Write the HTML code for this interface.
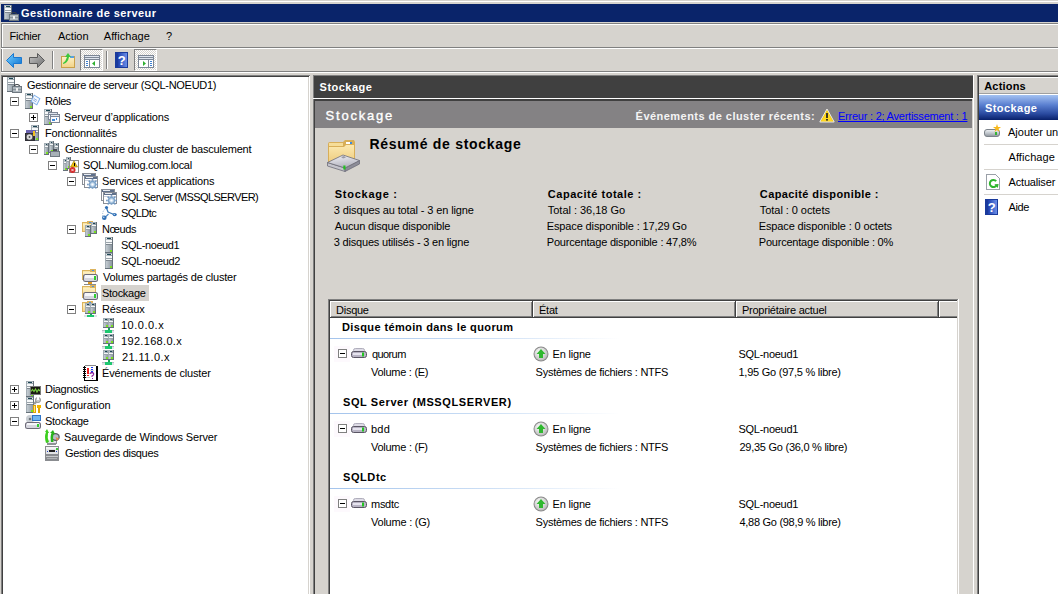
<!DOCTYPE html>
<html><head><meta charset="utf-8"><style>
*{margin:0;padding:0;box-sizing:border-box}
html,body{width:1058px;height:594px;overflow:hidden;background:#d6d3ce}
body{position:relative;font-family:"Liberation Sans",sans-serif;font-size:11px;color:#000}
.a{position:absolute}
.t{position:absolute;white-space:nowrap;line-height:16px;font-size:11px;letter-spacing:-0.25px}
.z{letter-spacing:0}
.n{letter-spacing:-0.15px}
.b{font-weight:bold;letter-spacing:0.4px}
.exp{position:absolute;width:9px;height:9px;border:1px solid #808080;background:#fff}
.exp:before{content:"";position:absolute;left:1px;top:3px;width:5px;height:1px;background:#000}
.exp.p:after{content:"";position:absolute;left:3px;top:1px;width:1px;height:5px;background:#000}
.ic{position:absolute;width:16px;height:16px}
.ic svg{display:block}
</style></head><body>
<svg width="0" height="0" style="position:absolute"><defs>
<linearGradient id="gTow" x1="0" x2="1" y1="0" y2="0"><stop offset="0" stop-color="#c4ccd2"/><stop offset="1" stop-color="#8e99a1"/></linearGradient>
<linearGradient id="gFold" x1="0" x2="0" y1="0" y2="1"><stop offset="0" stop-color="#fdf0c4"/><stop offset="1" stop-color="#f2d48a"/></linearGradient>
<linearGradient id="gDisk" x1="0" x2="0" y1="0" y2="1"><stop offset="0" stop-color="#f4f6f8"/><stop offset="0.5" stop-color="#c2c8ce"/><stop offset="1" stop-color="#8d949b"/></linearGradient>
<linearGradient id="gHelp" x1="0" x2="1" y1="0" y2="0"><stop offset="0" stop-color="#1d3fae"/><stop offset="1" stop-color="#6a8ee8"/></linearGradient>
<linearGradient id="gBlue" x1="0" x2="0" y1="0" y2="1"><stop offset="0" stop-color="#7ea4e6"/><stop offset="1" stop-color="#0a246a"/></linearGradient>
<linearGradient id="gArrB" x1="0" x2="1" y1="0" y2="1"><stop offset="0" stop-color="#74d0ff"/><stop offset="1" stop-color="#0a6fd0"/></linearGradient>
<linearGradient id="gArrG" x1="0" x2="1" y1="0" y2="1"><stop offset="0" stop-color="#c8c8c8"/><stop offset="1" stop-color="#6c6c6c"/></linearGradient>
<radialGradient id="gCirc" cx="0.4" cy="0.35" r="0.7"><stop offset="0" stop-color="#ffffff"/><stop offset="1" stop-color="#b8b8b8"/></radialGradient>
</defs></svg>
<div class="a" style="left:0px;top:0px;width:1058px;height:1px;background:#d6d3ce;"></div>
<div class="a" style="left:0px;top:1px;width:1058px;height:1px;background:#fff;"></div>
<div class="a" style="left:1px;top:4px;width:1057px;height:18px;background:#0a246a;"></div>
<div class="a" style="left:3px;top:5px;width:16px;height:16px"><svg width="16" height="16" viewBox="0 0 16 16" shape-rendering="crispEdges" ><rect x="1" y="0" width="8" height="15" fill="#66717a"/><rect x="1" y="0" width="7" height="14" fill="#a3adb4"/><rect x="2" y="1" width="6" height="13" fill="url(#gTow)"/><rect x="2" y="1" width="6" height="1" fill="#e6eaed"/><rect x="3" y="1" width="4" height="1" fill="#1d4654"/><rect x="2" y="3" width="6" height="2" fill="#f6f8f9"/><rect x="2" y="5" width="6" height="1" fill="#9aa3aa"/><rect x="2" y="6" width="6" height="1" fill="#f6f8f9"/><rect x="2" y="7" width="6" height="1" fill="#7f8890"/><path d="M8.5 9.5 Q8.5 7.5 11 7.5 Q13.5 7.5 13.5 9.5" fill="none" stroke="#3a3f45" stroke-width="1.2" shape-rendering="auto"/><rect x="6" y="9" width="10" height="7" rx="1" fill="#6e7880"/><rect x="7" y="10" width="8" height="5" fill="#aeb7be"/><rect x="7" y="12" width="8" height="1" fill="#8a949b"/><rect x="10" y="11" width="2" height="3" fill="#f0f0f0"/></svg></div>
<div class="t b" style="left:21.00px;top:5px;color:#fff;letter-spacing:0.409px;">Gestionnaire de serveur</div>
<div class="a" style="left:1px;top:23px;width:1057px;height:1px;background:#808080;"></div>
<div class="a" style="left:2px;top:24px;width:1056px;height:1px;background:#fff;"></div>
<div class="a" style="left:1px;top:23px;width:1px;height:50px;background:#808080;"></div>
<div class="a" style="left:2px;top:24px;width:1px;height:48px;background:#fff;"></div>
<div class="t z" style="left:9.60px;top:28px;;letter-spacing:-0.283px;">Fichier</div>
<div class="t z" style="left:58.00px;top:28px;;">Action</div>
<div class="t z" style="left:103.80px;top:28px;;letter-spacing:0.050px;">Affichage</div>
<div class="t z" style="left:166.00px;top:28px;;">?</div>
<div class="a" style="left:1px;top:47px;width:1057px;height:1px;background:#808080;"></div>
<div class="a" style="left:1px;top:48px;width:1057px;height:1px;background:#fff;"></div>
<div class="a" style="left:1px;top:71px;width:1057px;height:1px;background:#808080;"></div>
<div class="a" style="left:1px;top:72px;width:1057px;height:1px;background:#fff;"></div>
<div class="a" style="left:6px;top:53px;width:16px;height:16px"><svg width="16" height="16" viewBox="0 0 16 16"><path d="M0.5 7.5 L7.5 0.5 L7.5 4.5 L15.5 4.5 L15.5 10.5 L7.5 10.5 L7.5 14.5 Z" fill="url(#gArrB)" stroke="#1a78d0" stroke-width="1"/></svg></div>
<div class="a" style="left:29px;top:53px;width:16px;height:16px"><svg width="16" height="16" viewBox="0 0 16 16"><path d="M15.5 7.5 L8.5 0.5 L8.5 4.5 L0.5 4.5 L0.5 10.5 L8.5 10.5 L8.5 14.5 Z" fill="url(#gArrG)" stroke="#5a5a5a" stroke-width="1"/></svg></div>
<div class="a" style="left:52px;top:51px;width:1px;height:18px;background:#808080;"></div>
<div class="a" style="left:53px;top:51px;width:1px;height:18px;background:#fff;"></div>
<div class="a" style="left:60px;top:53px;width:16px;height:16px"><svg width="16" height="16" viewBox="0 0 16 16" shape-rendering="crispEdges"><rect x="1" y="3" width="14" height="12" fill="#c9a04a"/><rect x="2" y="4" width="12" height="10" fill="url(#gFold)"/><rect x="10" y="3" width="4" height="2" fill="#5aa0e0"/><path d="M3 10 Q6 8 7 4 L5 4 L8 0 L11 4 L9 4 Q8 10 3 11 Z" fill="#3cc83c" shape-rendering="auto"/></svg></div>
<div class="a" style="left:80px;top:49px;width:23px;height:22px;border-top:1px solid #808080;border-left:1px solid #808080;border-right:1px solid #fff;border-bottom:1px solid #fff;background-color:#fff;background-image:linear-gradient(45deg,#d6d3ce 25%,transparent 25%,transparent 75%,#d6d3ce 75%),linear-gradient(45deg,#d6d3ce 25%,transparent 25%,transparent 75%,#d6d3ce 75%);background-size:2px 2px;background-position:0 0,1px 1px"></div>
<div class="a" style="left:84px;top:55px;width:16px;height:13px"><svg width="16" height="13" viewBox="0 0 16 13" shape-rendering="crispEdges"><rect x="0" y="0" width="16" height="13" fill="#7d8796"/><rect x="1" y="1" width="14" height="1" fill="#dfe5ee"/><rect x="1" y="3" width="14" height="1" fill="#dfe5ee"/><rect x="1" y="5" width="4" height="7" fill="#fff"/><rect x="6" y="5" width="9" height="7" fill="#fff"/><rect x="2" y="6" width="2" height="1" fill="#3d7fd0"/><rect x="2" y="8" width="2" height="1" fill="#3d7fd0"/><rect x="2" y="10" width="2" height="1" fill="#3d7fd0"/><polygon points="8,8.5 11,6 11,11" fill="#30b030" shape-rendering="auto"/></svg></div>
<div class="a" style="left:106px;top:51px;width:1px;height:18px;background:#808080;"></div>
<div class="a" style="left:107px;top:51px;width:1px;height:18px;background:#fff;"></div>
<div class="a" style="left:115px;top:52px;width:13px;height:16px"><svg width="13" height="16" viewBox="0 0 13 16" shape-rendering="crispEdges"><rect x="0" y="0" width="13" height="16" fill="#1a3a9c"/><rect x="3" y="1" width="9" height="14" fill="url(#gHelp)"/><text x="6.8" y="13" font-family="Liberation Sans" font-weight="bold" font-size="13" fill="#fff" text-anchor="middle">?</text></svg></div>
<div class="a" style="left:134px;top:49px;width:23px;height:22px;border-top:1px solid #808080;border-left:1px solid #808080;border-right:1px solid #fff;border-bottom:1px solid #fff;background-color:#fff;background-image:linear-gradient(45deg,#d6d3ce 25%,transparent 25%,transparent 75%,#d6d3ce 75%),linear-gradient(45deg,#d6d3ce 25%,transparent 25%,transparent 75%,#d6d3ce 75%);background-size:2px 2px;background-position:0 0,1px 1px"></div>
<div class="a" style="left:138px;top:55px;width:16px;height:13px"><svg width="16" height="13" viewBox="0 0 16 13" shape-rendering="crispEdges"><rect x="0" y="0" width="16" height="13" fill="#7d8796"/><rect x="1" y="1" width="14" height="1" fill="#dfe5ee"/><rect x="1" y="3" width="14" height="1" fill="#dfe5ee"/><rect x="1" y="5" width="9" height="7" fill="#fff"/><rect x="11" y="5" width="4" height="7" fill="#fff"/><rect x="12" y="6" width="2" height="1" fill="#3d7fd0"/><rect x="12" y="8" width="2" height="1" fill="#3d7fd0"/><rect x="12" y="10" width="2" height="1" fill="#3d7fd0"/><polygon points="8,8.5 5,6 5,11" fill="#30b030" shape-rendering="auto"/></svg></div>
<div class="a" style="left:1px;top:75px;width:309px;height:530px;background:#808080;"></div>
<div class="a" style="left:2px;top:76px;width:308px;height:529px;background:#404040;"></div>
<div class="a" style="left:309px;top:76px;width:1px;height:529px;background:#fff;"></div>
<div class="a" style="left:308px;top:77px;width:1px;height:528px;background:#d6d3ce;"></div>
<div class="a" style="left:3px;top:77px;width:305px;height:528px;background:#fff;"></div>
<div class="ic" style="left:6px;top:77px"><svg width="16" height="16" viewBox="0 0 16 16" shape-rendering="crispEdges" ><rect x="1" y="0" width="8" height="15" fill="#66717a"/><rect x="1" y="0" width="7" height="14" fill="#a3adb4"/><rect x="2" y="1" width="6" height="13" fill="url(#gTow)"/><rect x="2" y="1" width="6" height="1" fill="#e6eaed"/><rect x="3" y="1" width="4" height="1" fill="#1d4654"/><rect x="2" y="3" width="6" height="2" fill="#f6f8f9"/><rect x="2" y="5" width="6" height="1" fill="#9aa3aa"/><rect x="2" y="6" width="6" height="1" fill="#f6f8f9"/><rect x="2" y="7" width="6" height="1" fill="#7f8890"/><path d="M8.5 9.5 Q8.5 7.5 11 7.5 Q13.5 7.5 13.5 9.5" fill="none" stroke="#3a3f45" stroke-width="1.2" shape-rendering="auto"/><rect x="6" y="9" width="10" height="7" rx="1" fill="#6e7880"/><rect x="7" y="10" width="8" height="5" fill="#aeb7be"/><rect x="7" y="12" width="8" height="1" fill="#8a949b"/><rect x="10" y="11" width="2" height="3" fill="#f0f0f0"/></svg></div>
<div class="t" style="left:27.00px;top:77px;;letter-spacing:-0.280px;">Gestionnaire de serveur (SQL-NOEUD1)</div>
<div class="exp" style="left:10px;top:97px"></div>
<div class="ic" style="left:25px;top:93px"><svg width="16" height="16" viewBox="0 0 16 16" shape-rendering="crispEdges" ><rect x="0" y="0" width="8" height="16" fill="#66717a"/><rect x="0" y="0" width="7" height="15" fill="#a3adb4"/><rect x="1" y="1" width="6" height="14" fill="url(#gTow)"/><rect x="1" y="1" width="6" height="1" fill="#e6eaed"/><rect x="2" y="1" width="4" height="1" fill="#1d4654"/><rect x="1" y="3" width="6" height="2" fill="#f6f8f9"/><rect x="1" y="5" width="6" height="1" fill="#9aa3aa"/><rect x="1" y="6" width="6" height="1" fill="#f6f8f9"/><rect x="1" y="7" width="6" height="1" fill="#7f8890"/><rect x="5" y="13" width="2" height="2" fill="#7ae020"/><polygon points="9,1.5 15.5,5.5 12,12.5 5.5,8.5" fill="#7fb0ea" shape-rendering="auto"/><polygon points="9.3,2.8 14.2,5.8 11.6,11.2 6.8,8.2" fill="#f4f8fd" shape-rendering="auto"/><path d="M8.8 5.5 L12 7.4 M8.2 7 L11.2 8.8" stroke="#6a8ed0" stroke-width="0.7" shape-rendering="auto"/></svg></div>
<div class="t" style="left:45.00px;top:93px;;letter-spacing:-0.450px;">Rôles</div>
<div class="exp p" style="left:29px;top:113px"></div>
<div class="ic" style="left:44px;top:109px"><svg width="16" height="16" viewBox="0 0 16 16" shape-rendering="crispEdges" ><rect x="0" y="0" width="8" height="16" fill="#66717a"/><rect x="0" y="0" width="7" height="15" fill="#a3adb4"/><rect x="1" y="1" width="6" height="14" fill="url(#gTow)"/><rect x="1" y="1" width="6" height="1" fill="#e6eaed"/><rect x="2" y="1" width="4" height="1" fill="#1d4654"/><rect x="1" y="3" width="6" height="2" fill="#f6f8f9"/><rect x="1" y="5" width="6" height="1" fill="#9aa3aa"/><rect x="1" y="6" width="6" height="1" fill="#f6f8f9"/><rect x="1" y="7" width="6" height="1" fill="#7f8890"/><rect x="5" y="13" width="2" height="2" fill="#7ae020"/><rect x="4" y="3" width="10" height="8" fill="#7d8796"/><rect x="5" y="4" width="8" height="1" fill="#dfe5ee"/><rect x="5" y="6" width="8" height="4" fill="#fbfbfd"/><rect x="6" y="5" width="10" height="9" fill="#7d8796"/><rect x="7" y="6" width="8" height="1" fill="#dfe5ee"/><rect x="7" y="8" width="8" height="5" fill="#fbfbfd"/><rect x="8" y="10" width="3" height="2" fill="#3d8ad8"/><rect x="12" y="9" width="1" height="2" fill="#3d8ad8"/></svg></div>
<div class="t" style="left:64.00px;top:109px;;letter-spacing:-0.143px;">Serveur d’applications</div>
<div class="exp" style="left:10px;top:129px"></div>
<div class="ic" style="left:25px;top:125px"><svg width="16" height="16" viewBox="0 0 16 16" shape-rendering="crispEdges" ><rect x="6" y="0" width="8" height="16" fill="#66717a"/><rect x="6" y="0" width="7" height="15" fill="#a3adb4"/><rect x="7" y="1" width="6" height="14" fill="url(#gTow)"/><rect x="7" y="1" width="6" height="1" fill="#e6eaed"/><rect x="8" y="1" width="4" height="1" fill="#1d4654"/><rect x="7" y="3" width="6" height="2" fill="#f6f8f9"/><rect x="7" y="5" width="6" height="1" fill="#9aa3aa"/><rect x="7" y="6" width="6" height="1" fill="#f6f8f9"/><rect x="7" y="7" width="6" height="1" fill="#7f8890"/><rect x="11" y="13" width="2" height="2" fill="#7ae020"/><rect x="1" y="5" width="10" height="3" fill="#6c64b0"/><rect x="0" y="8" width="10" height="8" fill="#2e2e34"/><rect x="1" y="9" width="7" height="6" fill="#484850"/><circle cx="4.5" cy="12" r="2.8" fill="#dcdcdc" shape-rendering="auto"/><circle cx="4.5" cy="12" r="0.9" fill="#555" shape-rendering="auto"/><rect x="8" y="6" width="2" height="5" fill="#f0c020"/></svg></div>
<div class="t" style="left:45.00px;top:125px;;letter-spacing:-0.143px;">Fonctionnalités</div>
<div class="exp" style="left:29px;top:145px"></div>
<div class="ic" style="left:44px;top:141px"><svg width="16" height="16" viewBox="0 0 16 16" shape-rendering="crispEdges" ><rect x="0" y="2" width="5" height="12" fill="#66717a"/><rect x="0" y="2" width="4" height="11" fill="#a3adb4"/><rect x="1" y="3" width="3" height="10" fill="url(#gTow)"/><rect x="2" y="3" width="1" height="1" fill="#1d4654"/><rect x="1" y="5" width="3" height="1" fill="#f6f8f9"/><rect x="1" y="6" width="3" height="1" fill="#9aa3aa"/><rect x="2" y="11" width="2" height="2" fill="#7ae020"/><rect x="5" y="0" width="5" height="12" fill="#66717a"/><rect x="5" y="0" width="4" height="11" fill="#a3adb4"/><rect x="6" y="1" width="3" height="10" fill="url(#gTow)"/><rect x="7" y="1" width="1" height="1" fill="#1d4654"/><rect x="6" y="3" width="3" height="1" fill="#f6f8f9"/><rect x="6" y="4" width="3" height="1" fill="#9aa3aa"/><rect x="7" y="9" width="2" height="2" fill="#7ae020"/><rect x="10" y="2" width="5" height="12" fill="#66717a"/><rect x="10" y="2" width="4" height="11" fill="#a3adb4"/><rect x="11" y="3" width="3" height="10" fill="url(#gTow)"/><rect x="12" y="3" width="1" height="1" fill="#1d4654"/><rect x="11" y="5" width="3" height="1" fill="#f6f8f9"/><rect x="11" y="6" width="3" height="1" fill="#9aa3aa"/><rect x="12" y="11" width="2" height="2" fill="#7ae020"/><rect x="6" y="10" width="10" height="6" fill="#6e7880"/><rect x="7" y="11" width="8" height="4" fill="#a7b0b7"/><rect x="9" y="8" width="4" height="2" fill="#4a4f55"/></svg></div>
<div class="t" style="left:65.00px;top:141px;;letter-spacing:-0.197px;">Gestionnaire du cluster de basculement</div>
<div class="exp" style="left:48px;top:161px"></div>
<div class="ic" style="left:63px;top:157px"><svg width="16" height="16" viewBox="0 0 16 16" shape-rendering="crispEdges" ><rect x="0" y="2" width="5" height="12" fill="#66717a"/><rect x="0" y="2" width="4" height="11" fill="#a3adb4"/><rect x="1" y="3" width="3" height="10" fill="url(#gTow)"/><rect x="2" y="3" width="1" height="1" fill="#1d4654"/><rect x="1" y="5" width="3" height="1" fill="#f6f8f9"/><rect x="1" y="6" width="3" height="1" fill="#9aa3aa"/><rect x="2" y="11" width="2" height="2" fill="#7ae020"/><rect x="3" y="0" width="5" height="12" fill="#66717a"/><rect x="3" y="0" width="4" height="11" fill="#a3adb4"/><rect x="4" y="1" width="3" height="10" fill="url(#gTow)"/><rect x="5" y="1" width="1" height="1" fill="#1d4654"/><rect x="4" y="3" width="3" height="1" fill="#f6f8f9"/><rect x="4" y="4" width="3" height="1" fill="#9aa3aa"/><rect x="5" y="9" width="2" height="2" fill="#7ae020"/><rect x="6" y="3" width="10" height="13" fill="#8a8a8a"/><rect x="7" y="4" width="8" height="11" fill="#fff"/><polygon points="11,4 14.5,10 7.5,10" fill="#f3c30f" stroke="#a07a00" stroke-width="0.6" shape-rendering="auto"/><rect x="10.5" y="6" width="1" height="2.5" fill="#000"/><circle cx="9.5" cy="13" r="3" fill="#d52b2b" shape-rendering="auto"/><path d="M8.3 11.8l2.4 2.4M10.7 11.8l-2.4 2.4" stroke="#fff" stroke-width="0.8" shape-rendering="auto"/></svg></div>
<div class="t" style="left:83.00px;top:157px;;letter-spacing:-0.290px;">SQL.Numilog.com.local</div>
<div class="exp" style="left:67px;top:177px"></div>
<div class="ic" style="left:82px;top:173px"><svg width="16" height="16" viewBox="0 0 16 16" shape-rendering="crispEdges" ><rect x="0" y="0" width="14" height="12" fill="#8a8e96"/><rect x="1" y="1" width="12" height="10" fill="#fff"/><rect x="1" y="1" width="12" height="2" fill="#60718c"/><rect x="2" y="1" width="7" height="1" fill="#e8ecf2"/><rect x="2" y="3" width="14" height="12" fill="#8a8e96"/><rect x="3" y="4" width="12" height="10" fill="#fff"/><rect x="3" y="4" width="12" height="2" fill="#60718c"/><rect x="4" y="4" width="7" height="1" fill="#e8ecf2"/><rect x="3" y="7" width="12" height="1" fill="#c8d0dc"/><rect x="14.30" y="10.70" width="1.6" height="1.6" fill="#6f95c0" shape-rendering="auto"/><rect x="12.95" y="13.95" width="1.6" height="1.6" fill="#6f95c0" shape-rendering="auto"/><rect x="9.70" y="15.30" width="1.6" height="1.6" fill="#6f95c0" shape-rendering="auto"/><rect x="6.45" y="13.95" width="1.6" height="1.6" fill="#6f95c0" shape-rendering="auto"/><rect x="5.10" y="10.70" width="1.6" height="1.6" fill="#6f95c0" shape-rendering="auto"/><rect x="6.45" y="7.45" width="1.6" height="1.6" fill="#6f95c0" shape-rendering="auto"/><rect x="9.70" y="6.10" width="1.6" height="1.6" fill="#6f95c0" shape-rendering="auto"/><rect x="12.95" y="7.45" width="1.6" height="1.6" fill="#6f95c0" shape-rendering="auto"/><circle cx="10.5" cy="11.5" r="3.7" fill="#7da3c8" shape-rendering="auto"/><circle cx="10.5" cy="11.5" r="2.3" fill="#c6daee" shape-rendering="auto"/><circle cx="10.5" cy="11.5" r="1.1" fill="#fff" shape-rendering="auto"/></svg></div>
<div class="t" style="left:102.00px;top:173px;;letter-spacing:-0.130px;">Services et applications</div>
<div class="ic" style="left:101px;top:189px"><svg width="16" height="16" viewBox="0 0 16 16" shape-rendering="crispEdges" ><rect x="0" y="0" width="14" height="12" fill="#8a8e96"/><rect x="1" y="1" width="12" height="10" fill="#fff"/><rect x="1" y="1" width="12" height="2" fill="#60718c"/><rect x="2" y="1" width="7" height="1" fill="#e8ecf2"/><rect x="2" y="3" width="14" height="12" fill="#8a8e96"/><rect x="3" y="4" width="12" height="10" fill="#fff"/><rect x="3" y="4" width="12" height="2" fill="#60718c"/><rect x="4" y="4" width="7" height="1" fill="#e8ecf2"/><rect x="3" y="7" width="12" height="1" fill="#c8d0dc"/><rect x="14.30" y="10.70" width="1.6" height="1.6" fill="#6f95c0" shape-rendering="auto"/><rect x="12.95" y="13.95" width="1.6" height="1.6" fill="#6f95c0" shape-rendering="auto"/><rect x="9.70" y="15.30" width="1.6" height="1.6" fill="#6f95c0" shape-rendering="auto"/><rect x="6.45" y="13.95" width="1.6" height="1.6" fill="#6f95c0" shape-rendering="auto"/><rect x="5.10" y="10.70" width="1.6" height="1.6" fill="#6f95c0" shape-rendering="auto"/><rect x="6.45" y="7.45" width="1.6" height="1.6" fill="#6f95c0" shape-rendering="auto"/><rect x="9.70" y="6.10" width="1.6" height="1.6" fill="#6f95c0" shape-rendering="auto"/><rect x="12.95" y="7.45" width="1.6" height="1.6" fill="#6f95c0" shape-rendering="auto"/><circle cx="10.5" cy="11.5" r="3.7" fill="#7da3c8" shape-rendering="auto"/><circle cx="10.5" cy="11.5" r="2.3" fill="#c6daee" shape-rendering="auto"/><circle cx="10.5" cy="11.5" r="1.1" fill="#fff" shape-rendering="auto"/></svg></div>
<div class="t" style="left:121.00px;top:189px;;letter-spacing:-0.578px;">SQL Server (MSSQLSERVER)</div>
<div class="ic" style="left:101px;top:205px"><svg width="16" height="16" viewBox="0 0 16 16" shape-rendering="crispEdges" ><g shape-rendering="auto"><path d="M5.5 3 L7 7 L13 9.5" stroke="#3d7ab8" stroke-width="1.3" fill="none"/><path d="M7.5 9 L5 11.5" stroke="#4a86c4" stroke-width="1.1"/><path d="M3.6 4.5 Q0.8 7.5 2 11" stroke="#98b4d2" stroke-width="1" stroke-dasharray="1 1" fill="none"/><circle cx="5.5" cy="2.5" r="1.6" fill="#2f6fb5"/><ellipse cx="13.7" cy="9.6" rx="2.1" ry="1.6" fill="#2f6fb5"/><circle cx="13.3" cy="9.4" r="0.6" fill="#cfe0f2"/><circle cx="3.3" cy="12.8" r="2.3" fill="#2f6fb5"/><circle cx="2.8" cy="12.3" r="0.8" fill="#cfe0f2"/></g></svg></div>
<div class="t" style="left:121.00px;top:205px;;letter-spacing:-0.560px;">SQLDtc</div>
<div class="exp" style="left:67px;top:225px"></div>
<div class="ic" style="left:82px;top:221px"><svg width="16" height="16" viewBox="0 0 16 16" shape-rendering="crispEdges" ><rect x="0" y="1" width="11" height="10" rx="1" fill="#dcb45e"/><rect x="5" y="0" width="6" height="3" rx="1" fill="#dcb45e"/><rect x="7" y="1" width="2" height="1" fill="#4a90e8"/><rect x="1" y="3" width="9" height="7" fill="url(#gFold)"/><rect x="1" y="2" width="4" height="1" fill="#f8e4a8"/><rect x="3" y="4" width="6" height="12" fill="#66717a"/><rect x="3" y="4" width="5" height="11" fill="#a3adb4"/><rect x="4" y="5" width="4" height="10" fill="url(#gTow)"/><rect x="5" y="5" width="2" height="1" fill="#1d4654"/><rect x="4" y="7" width="4" height="1" fill="#f6f8f9"/><rect x="4" y="8" width="4" height="1" fill="#9aa3aa"/><rect x="6" y="13" width="2" height="2" fill="#7ae020"/><rect x="9" y="1" width="6" height="12" fill="#66717a"/><rect x="9" y="1" width="5" height="11" fill="#a3adb4"/><rect x="10" y="2" width="4" height="10" fill="url(#gTow)"/><rect x="11" y="2" width="2" height="1" fill="#1d4654"/><rect x="10" y="4" width="4" height="1" fill="#f6f8f9"/><rect x="10" y="5" width="4" height="1" fill="#9aa3aa"/><rect x="12" y="10" width="2" height="2" fill="#7ae020"/></svg></div>
<div class="t" style="left:102.00px;top:221px;;letter-spacing:-0.400px;">Nœuds</div>
<div class="ic" style="left:101px;top:237px"><svg width="16" height="16" viewBox="0 0 16 16" shape-rendering="crispEdges" ><rect x="4" y="0" width="8" height="16" fill="#66717a"/><rect x="4" y="0" width="7" height="15" fill="#a3adb4"/><rect x="5" y="1" width="6" height="14" fill="url(#gTow)"/><rect x="5" y="1" width="6" height="1" fill="#e6eaed"/><rect x="6" y="1" width="4" height="1" fill="#1d4654"/><rect x="5" y="3" width="6" height="2" fill="#f6f8f9"/><rect x="5" y="5" width="6" height="1" fill="#9aa3aa"/><rect x="5" y="6" width="6" height="1" fill="#f6f8f9"/><rect x="5" y="7" width="6" height="1" fill="#7f8890"/><rect x="9" y="13" width="2" height="2" fill="#7ae020"/></svg></div>
<div class="t" style="left:121.00px;top:237px;;letter-spacing:-0.422px;">SQL-noeud1</div>
<div class="ic" style="left:101px;top:253px"><svg width="16" height="16" viewBox="0 0 16 16" shape-rendering="crispEdges" ><rect x="4" y="0" width="8" height="16" fill="#66717a"/><rect x="4" y="0" width="7" height="15" fill="#a3adb4"/><rect x="5" y="1" width="6" height="14" fill="url(#gTow)"/><rect x="5" y="1" width="6" height="1" fill="#e6eaed"/><rect x="6" y="1" width="4" height="1" fill="#1d4654"/><rect x="5" y="3" width="6" height="2" fill="#f6f8f9"/><rect x="5" y="5" width="6" height="1" fill="#9aa3aa"/><rect x="5" y="6" width="6" height="1" fill="#f6f8f9"/><rect x="5" y="7" width="6" height="1" fill="#7f8890"/><rect x="9" y="13" width="2" height="2" fill="#7ae020"/></svg></div>
<div class="t" style="left:121.00px;top:253px;;letter-spacing:-0.333px;">SQL-noeud2</div>
<div class="ic" style="left:82px;top:269px"><svg width="16" height="16" viewBox="0 0 16 16" shape-rendering="crispEdges" ><rect x="0" y="1" width="14" height="10" rx="1" fill="#dcb45e"/><rect x="8" y="0" width="6" height="3" rx="1" fill="#dcb45e"/><rect x="10" y="1" width="2" height="1" fill="#4a90e8"/><rect x="1" y="3" width="12" height="7" fill="url(#gFold)"/><rect x="1" y="2" width="7" height="1" fill="#f8e4a8"/><rect x="1" y="5" width="15" height="8" rx="2.5" fill="#6d6b78" shape-rendering="auto"/><rect x="2" y="6" width="13" height="6" rx="1.5" fill="#d6d6de" shape-rendering="auto"/><rect x="3" y="6" width="11" height="3" fill="#f6f6fa"/><rect x="12" y="7" width="2" height="4" fill="#30cc30"/><rect x="6" y="13" width="4" height="2" fill="#e09a1e"/><rect x="2" y="15" width="12" height="1" fill="#8a8a8a"/></svg></div>
<div class="t" style="left:103.00px;top:269px;;letter-spacing:-0.196px;">Volumes partagés de cluster</div>
<div class="a" style="left:101px;top:285px;width:48px;height:16px;background:#d6d3ce;"></div>
<div class="ic" style="left:82px;top:285px"><svg width="16" height="16" viewBox="0 0 16 16" shape-rendering="crispEdges" ><rect x="0" y="1" width="14" height="12" rx="1" fill="#dcb45e"/><rect x="8" y="0" width="6" height="3" rx="1" fill="#dcb45e"/><rect x="10" y="1" width="2" height="1" fill="#4a90e8"/><rect x="1" y="3" width="12" height="9" fill="url(#gFold)"/><rect x="1" y="2" width="7" height="1" fill="#f8e4a8"/><rect x="1" y="7" width="15" height="8" rx="2.5" fill="#6d6b78" shape-rendering="auto"/><rect x="2" y="8" width="13" height="6" rx="1.5" fill="#d6d6de" shape-rendering="auto"/><rect x="3" y="8" width="11" height="3" fill="#f6f6fa"/><rect x="12" y="9" width="2" height="4" fill="#30cc30"/></svg></div>
<div class="t" style="left:102.00px;top:285px;;letter-spacing:-0.286px;">Stockage</div>
<div class="exp" style="left:67px;top:305px"></div>
<div class="ic" style="left:82px;top:301px"><svg width="16" height="16" viewBox="0 0 16 16" shape-rendering="crispEdges" ><rect x="0" y="1" width="11" height="10" rx="1" fill="#dcb45e"/><rect x="5" y="0" width="6" height="3" rx="1" fill="#dcb45e"/><rect x="7" y="1" width="2" height="1" fill="#4a90e8"/><rect x="1" y="3" width="9" height="7" fill="url(#gFold)"/><rect x="1" y="2" width="4" height="1" fill="#f8e4a8"/><rect x="3" y="2" width="6" height="11" fill="#66717a"/><rect x="3" y="2" width="5" height="10" fill="#a3adb4"/><rect x="4" y="3" width="4" height="9" fill="url(#gTow)"/><rect x="5" y="3" width="2" height="1" fill="#1d4654"/><rect x="4" y="5" width="4" height="1" fill="#f6f8f9"/><rect x="4" y="6" width="4" height="1" fill="#9aa3aa"/><rect x="6" y="10" width="2" height="2" fill="#7ae020"/><rect x="8" y="2" width="6" height="11" fill="#66717a"/><rect x="8" y="2" width="5" height="10" fill="#a3adb4"/><rect x="9" y="3" width="4" height="9" fill="url(#gTow)"/><rect x="10" y="3" width="2" height="1" fill="#1d4654"/><rect x="9" y="5" width="4" height="1" fill="#f6f8f9"/><rect x="9" y="6" width="4" height="1" fill="#9aa3aa"/><rect x="11" y="10" width="2" height="2" fill="#7ae020"/><rect x="8" y="13" width="2" height="1" fill="#18a858"/><rect x="2" y="14" width="13" height="2" fill="#dfe3e8"/><rect x="5" y="14" width="7" height="2" fill="#1ec870"/></svg></div>
<div class="t" style="left:102.00px;top:301px;;letter-spacing:-0.117px;">Réseaux</div>
<div class="ic" style="left:101px;top:317px"><svg width="16" height="16" viewBox="0 0 16 16" shape-rendering="crispEdges" ><rect x="2" y="1" width="6" height="10" fill="#66717a"/><rect x="2" y="1" width="5" height="9" fill="#a3adb4"/><rect x="3" y="2" width="4" height="8" fill="url(#gTow)"/><rect x="4" y="2" width="2" height="1" fill="#1d4654"/><rect x="3" y="4" width="4" height="1" fill="#f6f8f9"/><rect x="3" y="5" width="4" height="1" fill="#9aa3aa"/><rect x="5" y="8" width="2" height="2" fill="#7ae020"/><rect x="7" y="1" width="6" height="10" fill="#66717a"/><rect x="7" y="1" width="5" height="9" fill="#a3adb4"/><rect x="8" y="2" width="4" height="8" fill="url(#gTow)"/><rect x="9" y="2" width="2" height="1" fill="#1d4654"/><rect x="8" y="4" width="4" height="1" fill="#f6f8f9"/><rect x="8" y="5" width="4" height="1" fill="#9aa3aa"/><rect x="10" y="8" width="2" height="2" fill="#7ae020"/><rect x="7" y="11" width="2" height="2" fill="#18a858"/><rect x="1" y="13" width="12" height="3" fill="#dfe3e8"/><rect x="1" y="13" width="12" height="1" fill="#b8bec6"/><rect x="4" y="13" width="7" height="3" fill="#1ec870"/></svg></div>
<div class="t" style="left:121.00px;top:317px;;letter-spacing:0.500px;">10.0.0.x</div>
<div class="ic" style="left:101px;top:333px"><svg width="16" height="16" viewBox="0 0 16 16" shape-rendering="crispEdges" ><rect x="2" y="1" width="6" height="10" fill="#66717a"/><rect x="2" y="1" width="5" height="9" fill="#a3adb4"/><rect x="3" y="2" width="4" height="8" fill="url(#gTow)"/><rect x="4" y="2" width="2" height="1" fill="#1d4654"/><rect x="3" y="4" width="4" height="1" fill="#f6f8f9"/><rect x="3" y="5" width="4" height="1" fill="#9aa3aa"/><rect x="5" y="8" width="2" height="2" fill="#7ae020"/><rect x="7" y="1" width="6" height="10" fill="#66717a"/><rect x="7" y="1" width="5" height="9" fill="#a3adb4"/><rect x="8" y="2" width="4" height="8" fill="url(#gTow)"/><rect x="9" y="2" width="2" height="1" fill="#1d4654"/><rect x="8" y="4" width="4" height="1" fill="#f6f8f9"/><rect x="8" y="5" width="4" height="1" fill="#9aa3aa"/><rect x="10" y="8" width="2" height="2" fill="#7ae020"/><rect x="7" y="11" width="2" height="2" fill="#18a858"/><rect x="1" y="13" width="12" height="3" fill="#dfe3e8"/><rect x="1" y="13" width="12" height="1" fill="#b8bec6"/><rect x="4" y="13" width="7" height="3" fill="#1ec870"/></svg></div>
<div class="t" style="left:121.00px;top:333px;;letter-spacing:0.320px;">192.168.0.x</div>
<div class="ic" style="left:101px;top:349px"><svg width="16" height="16" viewBox="0 0 16 16" shape-rendering="crispEdges" ><rect x="2" y="1" width="6" height="10" fill="#66717a"/><rect x="2" y="1" width="5" height="9" fill="#a3adb4"/><rect x="3" y="2" width="4" height="8" fill="url(#gTow)"/><rect x="4" y="2" width="2" height="1" fill="#1d4654"/><rect x="3" y="4" width="4" height="1" fill="#f6f8f9"/><rect x="3" y="5" width="4" height="1" fill="#9aa3aa"/><rect x="5" y="8" width="2" height="2" fill="#7ae020"/><rect x="7" y="1" width="6" height="10" fill="#66717a"/><rect x="7" y="1" width="5" height="9" fill="#a3adb4"/><rect x="8" y="2" width="4" height="8" fill="url(#gTow)"/><rect x="9" y="2" width="2" height="1" fill="#1d4654"/><rect x="8" y="4" width="4" height="1" fill="#f6f8f9"/><rect x="8" y="5" width="4" height="1" fill="#9aa3aa"/><rect x="10" y="8" width="2" height="2" fill="#7ae020"/><rect x="7" y="11" width="2" height="2" fill="#18a858"/><rect x="1" y="13" width="12" height="3" fill="#dfe3e8"/><rect x="1" y="13" width="12" height="1" fill="#b8bec6"/><rect x="4" y="13" width="7" height="3" fill="#1ec870"/></svg></div>
<div class="t" style="left:122.00px;top:349px;;letter-spacing:0.375px;">21.11.0.x</div>
<div class="ic" style="left:82px;top:365px"><svg width="16" height="16" viewBox="0 0 16 16" shape-rendering="crispEdges" ><rect x="3" y="0" width="11" height="1" fill="#8a8a8a"/><rect x="2" y="1" width="14" height="15" fill="#000"/><rect x="3" y="1" width="11" height="14" fill="#fff"/><rect x="1" y="2" width="1" height="1" fill="#000"/><rect x="3" y="2" width="1" height="1" fill="#000"/><rect x="2" y="3" width="1" height="1" fill="#000"/><rect x="1" y="4" width="1" height="1" fill="#000"/><rect x="3" y="4" width="1" height="1" fill="#000"/><rect x="2" y="5" width="1" height="1" fill="#000"/><rect x="1" y="6" width="1" height="1" fill="#000"/><rect x="3" y="6" width="1" height="1" fill="#000"/><rect x="2" y="7" width="1" height="1" fill="#000"/><rect x="1" y="8" width="1" height="1" fill="#000"/><rect x="3" y="8" width="1" height="1" fill="#000"/><rect x="2" y="9" width="1" height="1" fill="#000"/><rect x="1" y="10" width="1" height="1" fill="#000"/><rect x="3" y="10" width="1" height="1" fill="#000"/><rect x="2" y="11" width="1" height="1" fill="#000"/><rect x="1" y="12" width="1" height="1" fill="#000"/><rect x="3" y="12" width="1" height="1" fill="#000"/><rect x="2" y="13" width="1" height="1" fill="#000"/><rect x="5" y="3" width="2" height="6" fill="#ee2020"/><rect x="5" y="10" width="2" height="1" fill="#ee2020"/><rect x="9" y="2" width="2" height="1" fill="#1c3cf0"/><rect x="9" y="4" width="2" height="4" fill="#1c3cf0"/><path d="M8 9 Q8 7.6 10 7.6 Q12 7.8 11.6 9.5 Q11.3 10.5 10 11 L10 12" stroke="#8a1a9a" stroke-width="1.1" fill="none" shape-rendering="auto"/><rect x="9.5" y="13" width="1" height="1" fill="#8a1a9a"/><rect x="4" y="12" width="4" height="1" fill="#c8c8c8"/><rect x="8" y="5" width="4" height="1" fill="#d8d8d8"/></svg></div>
<div class="t" style="left:102.00px;top:365px;;letter-spacing:-0.150px;">Événements de cluster</div>
<div class="exp p" style="left:10px;top:385px"></div>
<div class="ic" style="left:25px;top:381px"><svg width="16" height="16" viewBox="0 0 16 16" shape-rendering="crispEdges" ><rect x="1" y="0" width="8" height="16" fill="#66717a"/><rect x="1" y="0" width="7" height="15" fill="#a3adb4"/><rect x="2" y="1" width="6" height="14" fill="url(#gTow)"/><rect x="2" y="1" width="6" height="1" fill="#e6eaed"/><rect x="3" y="1" width="4" height="1" fill="#1d4654"/><rect x="2" y="3" width="6" height="2" fill="#f6f8f9"/><rect x="2" y="5" width="6" height="1" fill="#9aa3aa"/><rect x="2" y="6" width="6" height="1" fill="#f6f8f9"/><rect x="2" y="7" width="6" height="1" fill="#7f8890"/><rect x="6" y="13" width="2" height="2" fill="#7ae020"/><rect x="5" y="5" width="11" height="9" fill="#7a7a7a"/><rect x="6" y="6" width="9" height="7" fill="#1a1a12"/><path d="M6 10.5 L7.5 8.5 L9 10.5 L10.5 8 L12 11 L13.5 8.5 L15 10" stroke="#7ad040" stroke-width="1.1" fill="none" shape-rendering="auto"/></svg></div>
<div class="t" style="left:45.00px;top:381px;;letter-spacing:-0.300px;">Diagnostics</div>
<div class="exp p" style="left:10px;top:401px"></div>
<div class="ic" style="left:25px;top:397px"><svg width="16" height="16" viewBox="0 0 16 16" shape-rendering="crispEdges" ><rect x="1" y="0" width="8" height="16" fill="#66717a"/><rect x="1" y="0" width="7" height="15" fill="#a3adb4"/><rect x="2" y="1" width="6" height="14" fill="url(#gTow)"/><rect x="2" y="1" width="6" height="1" fill="#e6eaed"/><rect x="3" y="1" width="4" height="1" fill="#1d4654"/><rect x="2" y="3" width="6" height="2" fill="#f6f8f9"/><rect x="2" y="5" width="6" height="1" fill="#9aa3aa"/><rect x="2" y="6" width="6" height="1" fill="#f6f8f9"/><rect x="2" y="7" width="6" height="1" fill="#7f8890"/><rect x="6" y="13" width="2" height="2" fill="#7ae020"/><g shape-rendering="auto"><path d="M9 7 L13 3" stroke="#9a9a9a" stroke-width="2.4"/><circle cx="13" cy="3" r="2.6" fill="#c8c8c8" stroke="#8a8a8a" stroke-width="0.8"/><rect x="12" y="0" width="2" height="3" fill="#fff"/></g><rect x="8" y="8" width="3" height="8" rx="1" fill="#e2a400"/><rect x="9" y="9" width="1" height="6" fill="#ffe680"/><rect x="12" y="8" width="4" height="3" fill="#f0b400"/><rect x="13" y="11" width="2" height="5" fill="#e2a400"/></svg></div>
<div class="t" style="left:45.00px;top:397px;;letter-spacing:0.025px;">Configuration</div>
<div class="exp" style="left:10px;top:417px"></div>
<div class="ic" style="left:25px;top:413px"><svg width="16" height="16" viewBox="0 0 16 16" shape-rendering="crispEdges" ><circle cx="5" cy="6" r="4" fill="#c9ced3" shape-rendering="auto"/><circle cx="5" cy="6" r="1.3" fill="#6c747b" shape-rendering="auto"/><rect x="7" y="2" width="9" height="6" fill="#2f74c8"/><rect x="8" y="3" width="7" height="4" fill="#6fb4f0"/><rect x="0" y="9" width="16" height="7" rx="2.5" fill="#6d6b78" shape-rendering="auto"/><rect x="1" y="10" width="14" height="5" rx="1.5" fill="#d6d6de" shape-rendering="auto"/><rect x="2" y="10" width="12" height="2" fill="#f6f6fa"/><rect x="12" y="11" width="2" height="3" fill="#30cc30"/></svg></div>
<div class="t" style="left:45.00px;top:413px;;letter-spacing:-0.271px;">Stockage</div>
<div class="ic" style="left:44px;top:429px"><svg width="16" height="16" viewBox="0 0 16 16" shape-rendering="crispEdges" ><rect x="3" y="11" width="10" height="5" rx="2" fill="#8e9296"/><rect x="4" y="11" width="8" height="3" rx="1" fill="#e4e6ea"/><ellipse cx="11.5" cy="8" rx="4.3" ry="4" fill="#55585e" shape-rendering="auto"/><ellipse cx="11.5" cy="8" rx="3" ry="2.8" fill="#b9bcc8" shape-rendering="auto"/><path d="M11.5 8 L15 9.5 L13 12 Z" fill="#e8884a" shape-rendering="auto"/><path d="M2 14 Q0 8 2 3 L1 3 L3 0 L5 4 L4 4 Q3 9 5 13 Z" fill="#3ccf1e" shape-rendering="auto"/><path d="M7 13 Q6 7 7.5 4 L6 4 L9 1 L11 5 L9.5 5 Q8.5 9 9.5 13 Z" fill="#28b51a" shape-rendering="auto"/></svg></div>
<div class="t" style="left:64.00px;top:429px;;letter-spacing:-0.159px;">Sauvegarde de Windows Server</div>
<div class="ic" style="left:44px;top:445px"><svg width="16" height="16" viewBox="0 0 16 16" shape-rendering="crispEdges" ><rect x="1" y="10" width="14" height="6" fill="#8a8c90"/><rect x="2" y="11" width="12" height="1" fill="#c8cacc"/><rect x="3" y="13" width="10" height="1" fill="#b0b2b4"/><rect x="1" y="1" width="14" height="9" rx="1" fill="#8a8c90"/><rect x="2" y="2" width="12" height="7" fill="#e2e3e5"/><rect x="2" y="2" width="12" height="2" fill="#f4f4f6"/><rect x="5" y="5" width="6" height="2" fill="#202020"/><rect x="3" y="6" width="1" height="1" fill="#2040c0"/><rect x="12" y="6" width="1" height="1" fill="#2040c0"/><rect x="12" y="3" width="2" height="2" fill="#3cc83c"/></svg></div>
<div class="t" style="left:65.00px;top:445px;;letter-spacing:-0.333px;">Gestion des disques</div>
<div class="a" style="left:313px;top:75px;width:661px;height:530px;background:#808080;"></div>
<div class="a" style="left:314px;top:76px;width:660px;height:529px;background:#404040;"></div>
<div class="a" style="left:973px;top:75px;width:1px;height:530px;background:#fff;"></div>
<div class="a" style="left:972px;top:98px;width:1px;height:507px;background:#d6d3ce;"></div>
<div class="a" style="left:315px;top:77px;width:658px;height:21px;background:#404040;"></div>
<div class="t b" style="left:319.60px;top:79px;color:#fff;letter-spacing:0.486px;">Stockage</div>
<div class="a" style="left:313px;top:98px;width:660px;height:1px;background:#fff;"></div>
<div class="a" style="left:315px;top:99px;width:657px;height:2px;background:#404040;"></div>
<div class="a" style="left:315px;top:101px;width:657px;height:27px;background:#848284;"></div>
<div class="a" style="left:315px;top:128px;width:657px;height:477px;background:#d6d3ce;"></div>
<div class="t" style="left:325.60px;top:108px;font-size:13px;color:#fff;-webkit-text-stroke:0.35px #fff;letter-spacing:1.771px;">Stockage</div>
<div class="t b" style="left:635.60px;top:108px;color:#f4f4f4;letter-spacing:0.462px;">Événements de cluster récents:</div>
<div class="a" style="left:819px;top:108px;width:16px;height:15px"><svg width="16" height="15" viewBox="0 0 16 15"><polygon points="8,1 15.2,14 0.8,14" fill="#f5c800" stroke="#e8e8f0" stroke-width="1" stroke-linejoin="round"/><polygon points="8,3 13.5,13 2.5,13" fill="#ffd820"/><rect x="7.2" y="5" width="1.6" height="5" fill="#101020"/><rect x="7.2" y="11" width="1.6" height="1.6" fill="#101020"/></svg></div>
<div class="t" style="left:838.00px;top:108px;color:#0000ff;letter-spacing:-0.232px;"><span style="text-decoration:underline">Erreur : 2; Avertissement : 1</span></div>
<div class="a" style="left:324px;top:136px;width:38px;height:38px"><svg width="38" height="38" viewBox="0 0 38 38"><defs><linearGradient id="gSF" x1="0" x2="0" y1="0" y2="1"><stop offset="0" stop-color="#fce9b0"/><stop offset="1" stop-color="#ecc878"/></linearGradient><linearGradient id="gST" x1="0" x2="0.3" y1="0" y2="1"><stop offset="0" stop-color="#f4f4f8"/><stop offset="1" stop-color="#b4b4c0"/></linearGradient></defs><path d="M4 8 Q4 6 6 6 L19 6 L21 4 L30 4 L31 6 L31 30 L4 30 Z" fill="#d8ae58"/><path d="M5 11 L20 11 L22 9 L30 9 L30 29 L5 29 Z" fill="url(#gSF)"/><path d="M5 7 L19 7 L19 10 L5 10 Z" fill="#f6dd98"/><rect x="22" y="6" width="6" height="2" fill="#fff"/><rect x="26" y="6" width="2" height="2" fill="#3a8ae0"/><path d="M3.5 26.5 L21 32 L21 35.5 L3.5 30 Z" fill="#c4c4cc" stroke="#6c6c78" stroke-width="0.8" stroke-linejoin="round"/><path d="M21 32 L35.5 24.5 L35.5 28 L21 35.5 Z" fill="#8c8c98" stroke="#6c6c78" stroke-width="0.8" stroke-linejoin="round"/><path d="M3.5 26.5 L19 19 L35.5 24.5 L21 32 Z" fill="url(#gST)" stroke="#6c6c78" stroke-width="0.8" stroke-linejoin="round"/><path d="M17 21 L20 20 L22 21.5 L19 22.5 Z" fill="#9a9aa6"/><rect x="19.3" y="29.5" width="2.2" height="4" fill="#22c022"/></svg></div>
<div class="t b" style="left:369.50px;top:136px;font-size:14px;letter-spacing:0.712px;">Résumé de stockage</div>
<div class="t b" style="left:334.80px;top:186px;;letter-spacing:0.733px;">Stockage :</div>
<div class="t n" style="left:333.80px;top:202px;;letter-spacing:-0.120px;">3 disques au total - 3 en ligne</div>
<div class="t n" style="left:334.80px;top:218px;;letter-spacing:-0.168px;">Aucun disque disponible</div>
<div class="t n" style="left:333.80px;top:234px;;letter-spacing:-0.193px;">3 disques utilisés - 3 en ligne</div>
<div class="t b" style="left:547.80px;top:186px;;letter-spacing:0.531px;">Capacité totale :</div>
<div class="t n" style="left:547.80px;top:202px;;letter-spacing:-0.027px;">Total : 36,18 Go</div>
<div class="t n" style="left:546.80px;top:218px;;letter-spacing:-0.133px;">Espace disponible : 17,29 Go</div>
<div class="t n" style="left:546.80px;top:234px;;letter-spacing:-0.193px;">Pourcentage disponible : 47,8%</div>
<div class="t b" style="left:759.80px;top:186px;;letter-spacing:0.395px;">Capacité disponible :</div>
<div class="t n" style="left:759.80px;top:202px;;letter-spacing:-0.053px;">Total : 0 octets</div>
<div class="t n" style="left:758.80px;top:218px;;letter-spacing:-0.137px;">Espace disponible : 0 octets</div>
<div class="t n" style="left:758.80px;top:234px;;letter-spacing:-0.215px;">Pourcentage disponible : 0%</div>
<div class="a" style="left:328px;top:299px;width:630px;height:306px;background:#808080;"></div>
<div class="a" style="left:329px;top:300px;width:629px;height:305px;background:#404040;"></div>
<div class="a" style="left:958px;top:299px;width:1px;height:306px;background:#fff;"></div>
<div class="a" style="left:957px;top:300px;width:1px;height:305px;background:#d6d3ce;"></div>
<div class="a" style="left:330px;top:301px;width:627px;height:304px;background:#fff;"></div>
<div class="a" style="left:330px;top:301px;width:627px;height:16px;background:#d6d3ce;"></div>
<div class="a" style="left:330px;top:316px;width:627px;height:1px;background:#808080;"></div>
<div class="a" style="left:330px;top:317px;width:627px;height:1px;background:#404040;"></div>
<div class="a" style="left:330px;top:301px;width:203px;height:1px;background:#fff;"></div>
<div class="a" style="left:330px;top:301px;width:1px;height:16px;background:#fff;"></div>
<div class="a" style="left:531px;top:302px;width:1px;height:15px;background:#808080;"></div>
<div class="a" style="left:532px;top:301px;width:1px;height:17px;background:#404040;"></div>
<div class="t" style="left:336.00px;top:302px;;">Disque</div>
<div class="a" style="left:533px;top:301px;width:203px;height:1px;background:#fff;"></div>
<div class="a" style="left:533px;top:301px;width:1px;height:16px;background:#fff;"></div>
<div class="a" style="left:734px;top:302px;width:1px;height:15px;background:#808080;"></div>
<div class="a" style="left:735px;top:301px;width:1px;height:17px;background:#404040;"></div>
<div class="t" style="left:539.00px;top:302px;;">État</div>
<div class="a" style="left:736px;top:301px;width:203px;height:1px;background:#fff;"></div>
<div class="a" style="left:736px;top:301px;width:1px;height:16px;background:#fff;"></div>
<div class="a" style="left:937px;top:302px;width:1px;height:15px;background:#808080;"></div>
<div class="a" style="left:938px;top:301px;width:1px;height:17px;background:#404040;"></div>
<div class="t" style="left:742.00px;top:302px;;">Propriétaire actuel</div>
<div class="a" style="left:939px;top:301px;width:18px;height:1px;background:#fff;"></div>
<div class="a" style="left:939px;top:301px;width:1px;height:16px;background:#fff;"></div>
<div class="t b" style="left:342.00px;top:319px;;letter-spacing:0.378px;">Disque témoin dans le quorum</div>
<div class="a" style="left:330px;top:338px;width:290px;height:1px;background:linear-gradient(90deg,#a4c4ec,#c8dcf4 50%,rgba(255,255,255,0))"></div>
<div class="a" style="left:334px;top:346px;width:16px;height:16px;background:#fdf9fd;"></div>
<div class="exp" style="left:338px;top:349px"></div>
<div class="a" style="left:351px;top:348px;width:16px;height:10px"><svg width="16" height="10" viewBox="0 0 16 10"><rect x="2.5" y="0.5" width="11" height="4" rx="1.8" fill="#dedce6" stroke="#b0aebc"/><rect x="0.5" y="3.5" width="15" height="6" rx="2" fill="#b8b4c4" stroke="#5a5664"/><rect x="2" y="5" width="9" height="2" fill="#e6e4ee"/><rect x="11" y="4.5" width="2" height="4" fill="#22c422"/></svg></div>
<div class="t" style="left:372.00px;top:346px;;letter-spacing:-0.600px;">quorum</div>
<div class="t" style="left:371.00px;top:364px;;letter-spacing:-0.273px;">Volume : (E)</div>
<div class="a" style="left:533px;top:346px;width:16px;height:16px"><svg width="16" height="16" viewBox="0 0 16 16"><circle cx="8" cy="8" r="7.5" fill="#8a8a8a"/><circle cx="8" cy="8" r="6.5" fill="url(#gCirc)"/><polygon points="8,3 12.5,8 10,8 10,12 6,12 6,8 3.5,8" fill="#30b830"/></svg></div>
<div class="t" style="left:552.60px;top:346px;;letter-spacing:-0.200px;">En ligne</div>
<div class="t" style="left:535.60px;top:364px;;letter-spacing:-0.254px;">Systèmes de fichiers : NTFS</div>
<div class="t" style="left:738.50px;top:346px;;letter-spacing:-0.278px;">SQL-noeud1</div>
<div class="t" style="left:738.50px;top:364px;;letter-spacing:-0.243px;">1,95 Go (97,5 % libre)</div>
<div class="t b" style="left:343.00px;top:394px;;letter-spacing:0.600px;">SQL Server (MSSQLSERVER)</div>
<div class="a" style="left:330px;top:413px;width:290px;height:1px;background:linear-gradient(90deg,#a4c4ec,#c8dcf4 50%,rgba(255,255,255,0))"></div>
<div class="a" style="left:334px;top:421px;width:16px;height:16px;background:#fdf9fd;"></div>
<div class="exp" style="left:338px;top:424px"></div>
<div class="a" style="left:351px;top:423px;width:16px;height:10px"><svg width="16" height="10" viewBox="0 0 16 10"><rect x="2.5" y="0.5" width="11" height="4" rx="1.8" fill="#dedce6" stroke="#b0aebc"/><rect x="0.5" y="3.5" width="15" height="6" rx="2" fill="#b8b4c4" stroke="#5a5664"/><rect x="2" y="5" width="9" height="2" fill="#e6e4ee"/><rect x="11" y="4.5" width="2" height="4" fill="#22c422"/></svg></div>
<div class="t" style="left:371.00px;top:421px;;letter-spacing:0.200px;">bdd</div>
<div class="t" style="left:371.00px;top:439px;;letter-spacing:-0.264px;">Volume : (F)</div>
<div class="a" style="left:533px;top:421px;width:16px;height:16px"><svg width="16" height="16" viewBox="0 0 16 16"><circle cx="8" cy="8" r="7.5" fill="#8a8a8a"/><circle cx="8" cy="8" r="6.5" fill="url(#gCirc)"/><polygon points="8,3 12.5,8 10,8 10,12 6,12 6,8 3.5,8" fill="#30b830"/></svg></div>
<div class="t" style="left:552.60px;top:421px;;letter-spacing:-0.200px;">En ligne</div>
<div class="t" style="left:535.60px;top:439px;;letter-spacing:-0.254px;">Systèmes de fichiers : NTFS</div>
<div class="t" style="left:738.50px;top:421px;;letter-spacing:-0.278px;">SQL-noeud1</div>
<div class="t" style="left:739.50px;top:439px;;letter-spacing:-0.259px;">29,35 Go (36,0 % libre)</div>
<div class="t b" style="left:343.00px;top:469px;;letter-spacing:0.580px;">SQLDtc</div>
<div class="a" style="left:330px;top:488px;width:290px;height:1px;background:linear-gradient(90deg,#a4c4ec,#c8dcf4 50%,rgba(255,255,255,0))"></div>
<div class="a" style="left:334px;top:496px;width:16px;height:16px;background:#fdf9fd;"></div>
<div class="exp" style="left:338px;top:499px"></div>
<div class="a" style="left:351px;top:498px;width:16px;height:10px"><svg width="16" height="10" viewBox="0 0 16 10"><rect x="2.5" y="0.5" width="11" height="4" rx="1.8" fill="#dedce6" stroke="#b0aebc"/><rect x="0.5" y="3.5" width="15" height="6" rx="2" fill="#b8b4c4" stroke="#5a5664"/><rect x="2" y="5" width="9" height="2" fill="#e6e4ee"/><rect x="11" y="4.5" width="2" height="4" fill="#22c422"/></svg></div>
<div class="t" style="left:371.00px;top:496px;;letter-spacing:-0.275px;">msdtc</div>
<div class="t" style="left:371.00px;top:514px;;letter-spacing:-0.227px;">Volume : (G)</div>
<div class="a" style="left:533px;top:496px;width:16px;height:16px"><svg width="16" height="16" viewBox="0 0 16 16"><circle cx="8" cy="8" r="7.5" fill="#8a8a8a"/><circle cx="8" cy="8" r="6.5" fill="url(#gCirc)"/><polygon points="8,3 12.5,8 10,8 10,12 6,12 6,8 3.5,8" fill="#30b830"/></svg></div>
<div class="t" style="left:552.60px;top:496px;;letter-spacing:-0.200px;">En ligne</div>
<div class="t" style="left:535.60px;top:514px;;letter-spacing:-0.254px;">Systèmes de fichiers : NTFS</div>
<div class="t" style="left:738.50px;top:496px;;letter-spacing:-0.278px;">SQL-noeud1</div>
<div class="t" style="left:739.50px;top:514px;;letter-spacing:-0.290px;">4,88 Go (98,9 % libre)</div>
<div class="a" style="left:977px;top:75px;width:81px;height:530px;background:#808080;"></div>
<div class="a" style="left:978px;top:76px;width:80px;height:529px;background:#404040;"></div>
<div class="a" style="left:979px;top:77px;width:79px;height:528px;background:#fff;"></div>
<div class="a" style="left:979px;top:78px;width:79px;height:15px;background:#d6d3ce;"></div>
<div class="a" style="left:979px;top:93px;width:79px;height:1px;background:#a0a0a0;"></div>
<div class="a" style="left:979px;top:95px;width:79px;height:25px;background:linear-gradient(180deg,#a4c2f2 0%,#5a7fd0 40%,#2a4aa0 75%,#08206a 100%)"></div>
<div class="t b" style="left:984.20px;top:78px;;letter-spacing:0.200px;">Actions</div>
<div class="t b" style="left:985.00px;top:100px;color:#fff;letter-spacing:0.429px;">Stockage</div>
<div class="t z" style="left:1008.00px;top:124px;;">Ajouter un disque</div>
<div class="t z" style="left:1008.50px;top:149px;;letter-spacing:0.088px;">Affichage</div>
<div class="t z" style="left:1008.50px;top:174px;;letter-spacing:-0.167px;">Actualiser</div>
<div class="t z" style="left:1008.50px;top:199px;;letter-spacing:-0.400px;">Aide</div>
<div class="a" style="left:984px;top:144px;width:74px;height:1px;background:#d6d3ce;"></div>
<div class="a" style="left:984px;top:169px;width:74px;height:1px;background:#d6d3ce;"></div>
<div class="a" style="left:984px;top:194px;width:74px;height:1px;background:#d6d3ce;"></div>
<div class="a" style="left:984px;top:124px;width:17px;height:13px"><svg width="17" height="13" viewBox="0 0 17 13"><rect x="0.5" y="5.5" width="15" height="7" rx="2.5" fill="url(#gDisk)" stroke="#7c838a"/><rect x="11" y="8" width="2" height="3" fill="#35b535"/><path d="M13 0 L14 3 L17 3 L14.5 5 L15.5 8 L13 6 L10.5 8 L11.5 5 L9 3 L12 3 Z" fill="#f8b818"/></svg></div>
<div class="a" style="left:986px;top:174px;width:14px;height:16px"><svg width="14" height="16" viewBox="0 0 14 16" shape-rendering="crispEdges"><path d="M0.5 0.5 L9.5 0.5 L13.5 4.5 L13.5 15.5 L0.5 15.5 Z" fill="#fff" stroke="#9aa0a8"/><path d="M10.2 7.2 A3.6 3.6 0 1 0 10.6 11.2" fill="none" stroke="#2fb52f" stroke-width="2" shape-rendering="auto"/><polygon points="8.4,10.2 12.6,10 11.8,14" fill="#2fb52f" shape-rendering="auto"/></svg></div>
<div class="a" style="left:985px;top:199px;width:13px;height:16px"><svg width="13" height="16" viewBox="0 0 13 16" shape-rendering="crispEdges"><rect x="0" y="0" width="13" height="16" fill="#1a3a9c"/><rect x="3" y="1" width="9" height="14" fill="url(#gHelp)"/><text x="6.8" y="13" font-family="Liberation Sans" font-weight="bold" font-size="13" fill="#fff" text-anchor="middle">?</text></svg></div>
</body></html>
